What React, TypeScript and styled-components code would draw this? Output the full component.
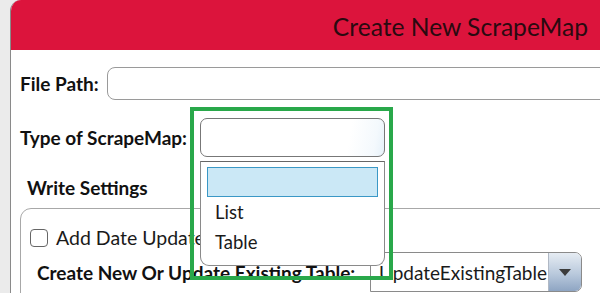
import { PropsWithChildren } from "react";
import styled, { createGlobalStyle } from "styled-components";

const GlobalStyle = createGlobalStyle`
  html, body {
    margin: 0;
    padding: 0;
    background: #ebebeb;
    overflow: hidden;
  }
  body {
    font-family: Lato, "Open Sans", sans-serif;
    color: #111;
  }
`;

const Desktop = styled.div`
  width: 600px;
  height: 293px;
  padding-left: 10px;
  box-sizing: border-box;
  overflow: hidden;
`;

const Window = styled.div`
  width: 620px;
  height: 320px;
  background: #fff;
  border-left: 1px solid #8a8a8a;
  border-top-left-radius: 11px;
  overflow: hidden;
`;

const Header = styled.header`
  height: 50px;
  background: #dc143c;
  display: flex;
  align-items: center;
  justify-content: flex-end;
  padding-right: 43px;
`;

const Title = styled.h1`
  margin: 0;
  font-weight: 400;
  font-size: 24.6px;
  color: #2a0a10;
  padding-top: 2px;
`;

const Body = styled.div`
  padding: 17px 0 0 9px;
`;

const Row = styled.div<{ $height: number; $top: number }>`
  display: flex;
  align-items: center;
  height: ${({ $height }) => $height}px;
  margin-top: ${({ $top }) => $top}px;
`;

const Label = styled.label<{ $width: number }>`
  flex: 0 0 ${({ $width }) => $width}px;
  font-weight: 700;
  font-size: 19px;
  color: #111;
`;

const TextInput = styled.div`
  flex: 1;
  height: 100%;
  box-sizing: border-box;
  border: 1px solid #9a9a9a;
  border-radius: 8px;
  background: #fff;
`;

const ComboWrap = styled.div`
  position: relative;
  width: 185px;
  height: 100%;
`;

const Combo = styled.div`
  height: 100%;
  box-sizing: border-box;
  border: 1.5px solid #777;
  border-radius: 7px;
  background: linear-gradient(100deg, #fff 80%, #f4f9fd 94%, #e6f1f9 100%);
`;

const Popup = styled.ul`
  position: absolute;
  z-index: 2;
  top: calc(100% + 4px);
  left: 0;
  width: 100%;
  height: 105px;
  margin: 0;
  padding: 5px 6px;
  box-sizing: border-box;
  list-style: none;
  background: #fff;
  border: 1.5px solid #8a8a8a;
  border-top-color: #666;
  border-radius: 0 0 9px 9px;
`;

const Option = styled.li<{ $selected?: boolean }>`
  height: 30px;
  box-sizing: border-box;
  padding-left: 7px;
  display: flex;
  align-items: center;
  font-size: 18.5px;
  color: #1a1a1a;
  background: ${({ $selected }) => ($selected ? "#cbe8f6" : "transparent")};
  border: 1.5px solid ${({ $selected }) => ($selected ? "#3a98c6" : "transparent")};
`;

const Highlight = styled.div`
  position: absolute;
  z-index: 3;
  left: -10px;
  top: -11px;
  width: 203px;
  height: 173px;
  box-sizing: border-box;
  border: 4px solid #29a84a;
  pointer-events: none;
`;

const SectionTitle = styled.h2`
  margin: 20px 0 0 7px;
  font-size: 19px;
  font-weight: 700;
  line-height: 22px;
`;

const GroupBox = styled.fieldset`
  margin: 9px 0 0 0;
  padding: 17px 0 0 9px;
  border: 1px solid #a8a8a8;
  border-radius: 11px;
  height: 120px;
`;

const CheckRow = styled.div`
  display: flex;
  align-items: center;
  gap: 8px;
  font-size: 19.5px;
  color: #1a1a1a;
`;

const CheckBox = styled.span`
  width: 18px;
  height: 18px;
  box-sizing: border-box;
  border: 1.5px solid #666;
  border-radius: 4px;
  background: #fff;
`;

const TableRow = styled.div`
  display: flex;
  align-items: center;
  margin-top: 3px;
  padding-left: 7px;
  height: 40px;
`;

const TableLabel = styled.span`
  flex: 0 0 333px;
  font-weight: 700;
  font-size: 19px;
`;

const SelectBox = styled.div`
  width: 212px;
  height: 100%;
  display: flex;
  box-sizing: border-box;
  border: 1px solid #8a8a8a;
  border-radius: 0 7px 7px 0;
  overflow: hidden;
`;

const SelectValue = styled.span`
  flex: 1;
  padding-left: 8px;
  display: flex;
  align-items: center;
  font-size: 19px;
  color: #1a1a1a;
  background: #fff;
`;

const SelectButton = styled.span`
  flex: 0 0 32px;
  display: flex;
  align-items: center;
  justify-content: center;
  border-left: 1px solid #b0b8c4;
  background: linear-gradient(180deg, #e6ecf3 0%, #b9c9dc 55%, #8ea5c3 100%);
`;

const Caret = () => (
  <svg width="12" height="7" viewBox="0 0 12 7">
    <path d="M0 0 H12 L6 7 Z" fill="#3c3c3c" />
  </svg>
);

const Section = ({ children }: PropsWithChildren) => <>{children}</>;

export default function App() {
  return (
    <>
      <GlobalStyle />
      <Desktop>
        <Window>
          <Header>
            <Title>Create New ScrapeMap</Title>
          </Header>
          <Body>
            <Row $height={33} $top={0}>
              <Label $width={87}>File Path:</Label>
              <TextInput />
            </Row>
            <Row $height={39} $top={18}>
              <Label $width={180}>Type of ScrapeMap:</Label>
              <ComboWrap>
                <Combo />
                <Popup>
                  <Option $selected />
                  <Option>List</Option>
                  <Option>Table</Option>
                </Popup>
                <Highlight />
              </ComboWrap>
            </Row>
            <Section>
              <SectionTitle>Write Settings</SectionTitle>
              <GroupBox>
                <CheckRow>
                  <CheckBox />
                  Add Date Updated
                </CheckRow>
                <TableRow>
                  <TableLabel>Create New Or Update Existing Table:</TableLabel>
                  <SelectBox>
                    <SelectValue>UpdateExistingTable</SelectValue>
                    <SelectButton>
                      <Caret />
                    </SelectButton>
                  </SelectBox>
                </TableRow>
              </GroupBox>
            </Section>
          </Body>
        </Window>
      </Desktop>
    </>
  );
}
